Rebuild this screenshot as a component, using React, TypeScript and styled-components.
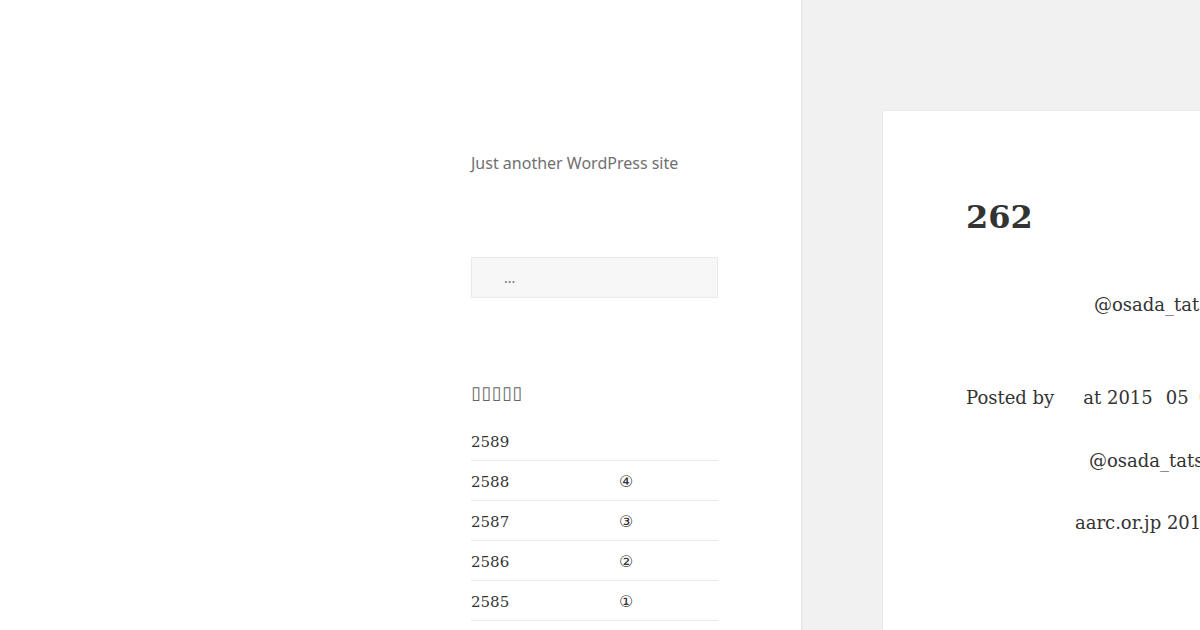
import React from 'react'
import styled, { createGlobalStyle } from 'styled-components'

const GlobalStyle = createGlobalStyle`
  html, body {
    margin: 0;
    padding: 0;
    background: #f1f1f1;
    overflow: hidden;
  }
  body {
    width: 1200px;
    height: 630px;
    font-family: 'DejaVu Serif', serif;
    color: #333;
  }
`

const Page = styled.div`
  display: flex;
  width: 1200px;
  height: 630px;
  overflow: hidden;
`

const Sidebar = styled.aside`
  flex: 0 0 802px;
  height: 630px;
  background: #fff;
  box-shadow: 0 0 1px rgba(0, 0, 0, 0.15);
  border-right: 1px solid #e6e6e6;
  box-sizing: border-box;
  padding: 152px 0 0 471px;
`

const SidebarInner = styled.div`
  width: 247px;
`

const SiteDescription = styled.p`
  margin: 0;
  font-family: 'Noto Sans', sans-serif;
  font-size: 16px;
  line-height: 22px;
  color: #707070;
`

const SearchBox = styled.div`
  margin-top: 83px;
  height: 41px;
  box-sizing: border-box;
  background: #f7f7f7;
  border: 1px solid #eaeaea;
  padding-left: 32px;
  display: flex;
  align-items: center;
  font-family: 'Noto Sans', sans-serif;
  font-size: 14px;
  color: #707070;
`

const WidgetTitle = styled.h2`
  margin: 84px 0 19px;
  height: 20px;
  display: flex;
  align-items: center;
  font-family: 'DejaVu Sans', sans-serif;
  font-weight: 400;
  font-size: 18px;
  letter-spacing: 0.4px;
  color: #666;
`

const PostList = styled.ul`
  list-style: none;
  margin: 0;
  padding: 0;
`

const PostItem = styled.li`
  display: grid;
  grid-template-columns: 148px auto;
  align-items: center;
  padding-top: 2px;
  box-sizing: border-box;
  height: 40px;
  border-bottom: 1px solid #eaeaea;
  font-size: 15px;
  color: #333;
`

const Mark = styled.span`
  font-family: 'DejaVu Sans', 'Noto Sans CJK JP', sans-serif;
  font-size: 16px;
`

const Main = styled.main`
  flex: 1 1 auto;
  padding: 111px 0 0 81px;
  min-width: 0;
`

const Article = styled.article`
  width: 700px;
  height: 600px;
  background: #fff;
  box-shadow: 0 0 1px rgba(0, 0, 0, 0.2);
  padding: 0 0 0 83px;
  box-sizing: border-box;
  white-space: nowrap;
`

const EntryTitle = styled.h1`
  margin: 0;
  padding-top: 83px;
  height: 46px;
  line-height: 46px;
  font-size: 32px;
  font-weight: 700;
  color: #333;
`

const Para = styled.p<{ indent: number; top: number }>`
  margin: ${p => p.top}px 0 0;
  padding-left: ${p => p.indent}px;
  font-size: 18px;
  line-height: 28px;
  color: #333;
`

const Gap = styled.span<{ w: number }>`
  display: inline-block;
  width: ${p => p.w}px;
`

const posts = [
  { id: '2589', mark: '' },
  { id: '2588', mark: '④' },
  { id: '2587', mark: '③' },
  { id: '2586', mark: '②' },
  { id: '2585', mark: '①' }
]

export default function App() {
  return (
    <>
      <GlobalStyle />
      <Page>
        <Sidebar>
          <SidebarInner>
            <SiteDescription>Just another WordPress site</SiteDescription>
            <SearchBox>...</SearchBox>
            <WidgetTitle>▯▯▯▯▯</WidgetTitle>
            <PostList>
              {posts.map(p => (
                <PostItem key={p.id}>
                  <span>{p.id}</span>
                  <Mark>{p.mark}</Mark>
                </PostItem>
              ))}
            </PostList>
          </SidebarInner>
        </Sidebar>
        <Main>
          <Article>
            <EntryTitle>262</EntryTitle>
            <Para indent={128} top={51}>@osada_tatsuya</Para>
            <Para indent={0} top={65}>
              Posted by<Gap w={29} />at 2015<Gap w={13} />05<Gap w={10} />05
            </Para>
            <Para indent={123} top={35}>@osada_tatsuya</Para>
            <Para indent={109} top={34}>aarc.or.jp 2015</Para>
          </Article>
        </Main>
      </Page>
    </>
  )
}
